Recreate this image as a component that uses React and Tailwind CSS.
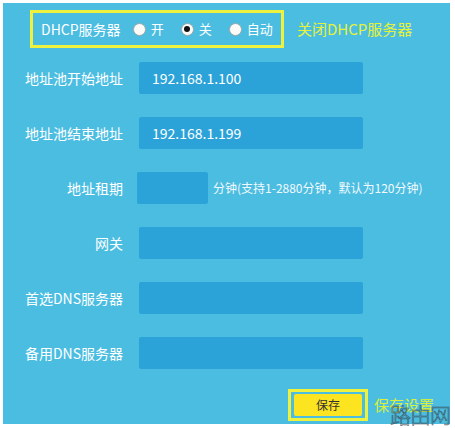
const font = { fontFamily: '"Noto Sans CJK SC", "Liberation Sans", sans-serif' };

function Radio({ checked, label }) {
  return (
    <label className="flex items-center gap-[5px]">
      <span className="flex h-[13px] w-[13px] items-center justify-center rounded-full border border-[#9aa7ad] bg-[#fbfbf8]">
        {checked && <span className="h-[6px] w-[6px] rounded-full bg-[#111]" />}
      </span>
      <span className="text-[13px] text-white">{label}</span>
    </label>
  );
}

function Row({ label, value, narrow, note }) {
  return (
    <div className="flex h-[32px] items-center">
      <div className="w-[120px] shrink-0 text-right text-[14px] text-white">{label}</div>
      <div
        className={
          narrow
            ? 'ml-[14px] flex h-full w-[71px] items-center rounded-[2px] bg-[#2ba3d9]'
            : 'ml-[16px] flex h-full w-[224px] items-center rounded-[2px] bg-[#2ba3d9] pl-[13px] text-[14px] text-white'
        }
      >
        {value}
      </div>
      {note && <div className="ml-[5px] text-[12px] text-[#f2f9fc]">{note}</div>}
    </div>
  );
}

export default function App() {
  return (
    <div className="h-[428px] w-[455px] bg-white p-[3px] pr-[5px] pb-[4px]" style={font}>
      <div className="relative flex h-full flex-col bg-[#4bbde1]">
        <div className="ml-[27px] mt-[7px] flex items-center">
          <div className="flex h-[38px] w-[254px] items-center border-[3px] border-[#eef23e] pl-[8px]">
            <span className="mr-[12px] text-[14px] text-white">DHCP服务器</span>
            <div className="flex items-center gap-[17px]">
              <Radio label="开" />
              <Radio label="关" checked />
              <Radio label="自动" />
            </div>
          </div>
          <span className="ml-[13px] text-[15px] text-[#e4f23c]">关闭DHCP服务器</span>
        </div>

        <div className="mt-[14px] flex flex-col gap-[23px]">
          <Row label="地址池开始地址" value="192.168.1.100" />
          <Row label="地址池结束地址" value="192.168.1.199" />
          <Row label="地址租期" narrow note="分钟(支持1-2880分钟，默认为120分钟)" />
          <Row label="网关" />
          <Row label="首选DNS服务器" />
          <Row label="备用DNS服务器" />
        </div>

        <div className="ml-[285px] mt-[20px] flex items-center">
          <div className="flex h-[32px] w-[80px] items-center justify-center border-[3px] border-[#eef23e]">
            <button className="h-[22px] w-[68px] rounded-[2px] bg-[#fce420] text-[12px] text-[#333]">保存</button>
          </div>
          <span className="ml-[6px] text-[15px] text-[#d9f03c]">保存设置</span>
        </div>

        <div className="absolute bottom-[-1px] right-0 text-[21px] font-light leading-none tracking-[-1px] text-transparent [-webkit-text-stroke:0.5px_#3b4b55]">
          路由网
        </div>
      </div>
    </div>
  );
}
